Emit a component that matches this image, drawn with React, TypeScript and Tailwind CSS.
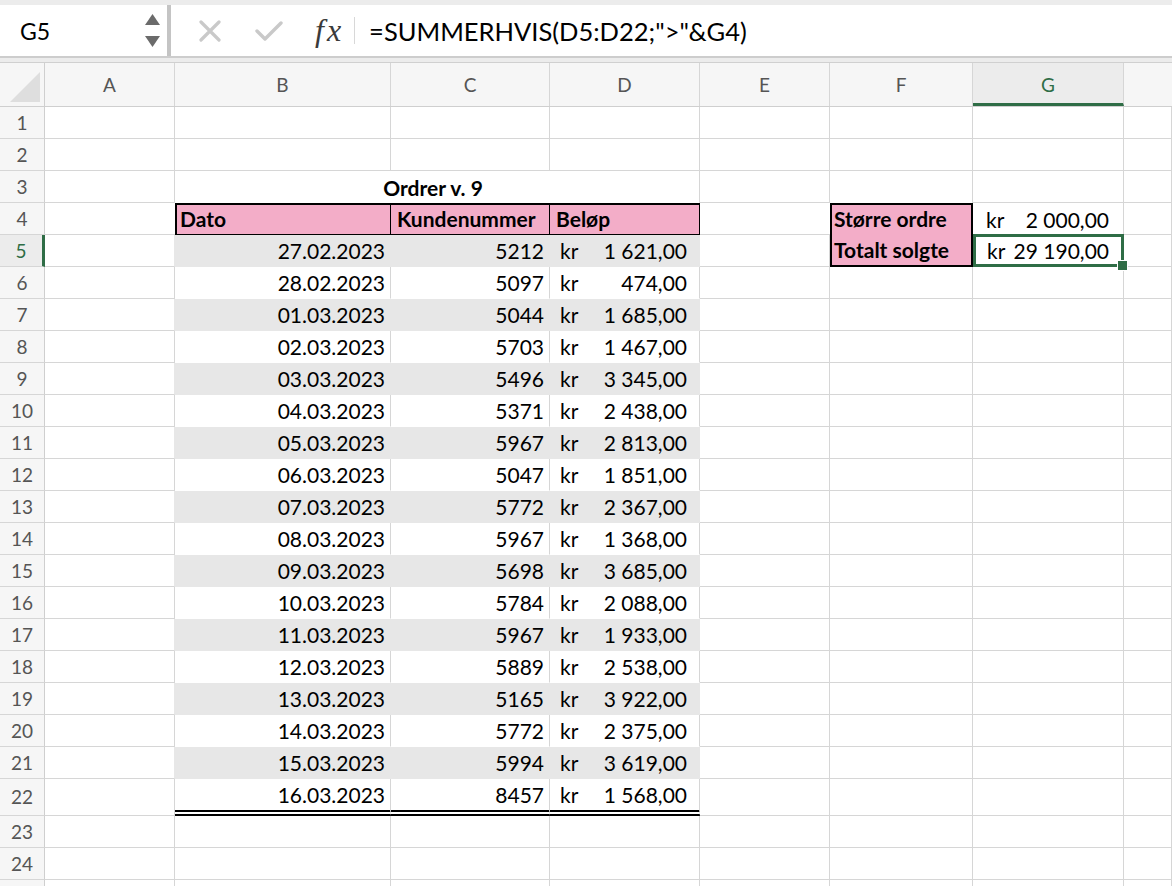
import React from 'react';

const GRID = 'grid grid-cols-[45px_130px_216px_159px_150px_130px_143px_151px_48px]';
const FONT = { fontFamily: 'Lato, "Open Sans", Arial, sans-serif' };

const data = [
  ['27.02.2023', '5212', '1 621,00'],
  ['28.02.2023', '5097', '474,00'],
  ['01.03.2023', '5044', '1 685,00'],
  ['02.03.2023', '5703', '1 467,00'],
  ['03.03.2023', '5496', '3 345,00'],
  ['04.03.2023', '5371', '2 438,00'],
  ['05.03.2023', '5967', '2 813,00'],
  ['06.03.2023', '5047', '1 851,00'],
  ['07.03.2023', '5772', '2 367,00'],
  ['08.03.2023', '5967', '1 368,00'],
  ['09.03.2023', '5698', '3 685,00'],
  ['10.03.2023', '5784', '2 088,00'],
  ['11.03.2023', '5967', '1 933,00'],
  ['12.03.2023', '5889', '2 538,00'],
  ['13.03.2023', '5165', '3 922,00'],
  ['14.03.2023', '5772', '2 375,00'],
  ['15.03.2023', '5994', '3 619,00'],
  ['16.03.2023', '8457', '1 568,00'],
];

// plain grid cell
const Cell = ({ className = '', children }: { className?: string; children?: React.ReactNode }) => (
  <div className={`flex items-end pb-[3px] whitespace-nowrap overflow-hidden border-r border-b border-[#d6d6d6] ${className}`}>
    {children}
  </div>
);

const RowHead = ({ n, active, hideLabel }: { n: number; active?: boolean; hideLabel?: boolean }) => (
  <div
    className={`flex items-center justify-center text-[19px] border-b border-[#d6d6d6] ${
      active ? 'bg-[#ececec] text-[#2f6d46] border-r-[3px] border-r-[#2f6d46]' : 'bg-[#f6f6f6] text-[#555] border-r border-r-[#cfcfcf]'
    }`}
  >
    {hideLabel ? '' : n}
  </div>
);

function FormulaBar() {
  return (
    <div className="h-[63px] bg-[#ececec] pt-[5px] border-b border-[#d0d0d0]">
      <div className="h-[53px] flex bg-white border-b-2 border-[#cdcdcd]">
        <div className="w-[167px] flex items-center justify-between pl-[20px] pr-[7px] text-[23px] text-black">
          <span>G5</span>
          <svg width="15" height="34" viewBox="0 0 15 34">
            <polygon points="7.5,0 15,11 0,11" fill="#6b6b6b" />
            <polygon points="0,22 15,22 7.5,33" fill="#6b6b6b" />
          </svg>
        </div>
        <div className="w-[4px] bg-[#c4c4c4]" />
        <div className="flex-1 flex items-center">
          <svg className="ml-[28px]" width="22" height="22" viewBox="0 0 22 22">
            <path d="M2 2 L20 20 M20 2 L2 20" stroke="#c9c9c9" strokeWidth="3.2" strokeLinecap="round" />
          </svg>
          <svg className="ml-[34px]" width="28" height="20" viewBox="0 0 28 20">
            <path d="M2 10 L10 18 L26 2" stroke="#c9c9c9" strokeWidth="3.4" fill="none" strokeLinecap="round" strokeLinejoin="round" />
          </svg>
          <span
            className="ml-[32px] text-[32px] italic text-[#3a3a3a] tracking-[3px] leading-none pb-[2px]"
            style={{ fontFamily: '"Liberation Serif", "DejaVu Serif", serif' }}
          >
            fx
          </span>
          <div className="ml-[10px] w-px h-[27px] bg-[#d8d8d8]" />
          <span className="ml-[14px] text-[25.5px] leading-[30px] text-black">=SUMMERHVIS(D5:D22;"&gt;"&amp;G4)</span>
        </div>
      </div>
    </div>
  );
}

function ColumnHeader() {
  const cols = ['B', 'C', 'D', 'E', 'F'];
  return (
    <div className={`${GRID} h-[44px] bg-[#f6f6f6] border-b border-[#cfcfcf]`}>
      <div className="border-r border-[#cfcfcf] flex items-end justify-end pr-[4px] pb-[4px]">
        <svg width="30" height="30" viewBox="0 0 30 30">
          <polygon points="0,30 30,0 30,30" fill="#dedede" />
        </svg>
      </div>
      <div className="border-r border-[#d6d6d6] flex items-center justify-center text-[19px] text-[#555]">A</div>
      {cols.map((c) => (
        <div key={c} className="border-r border-[#d6d6d6] flex items-center justify-center text-[19px] text-[#555]">
          {c}
        </div>
      ))}
      <div className="bg-[#ececec] border-r border-[#d6d6d6] border-b-[3px] border-b-[#2f6d46] flex items-center justify-center text-[19px] text-[#2f6d46] pt-[3px]">
        G
      </div>
      <div />
    </div>
  );
}

function BlankRow({ n, hideLabel }: { n: number; hideLabel?: boolean }) {
  return (
    <div className={`${GRID} h-[32px]`}>
      <RowHead n={n} hideLabel={hideLabel} />
      <Cell />
      <Cell />
      <Cell />
      <Cell />
      <Cell />
      <Cell />
      <Cell />
      <Cell />
    </div>
  );
}

function DataRow({ n, d }: { n: number; d: string[] }) {
  const shaded = n % 2 === 1;
  const last = n === 22;
  const body = shaded
    ? 'bg-[#e7e7e7] border-[#e7e7e7]'
    : last
    ? 'border-b-[6px] border-double border-b-black pb-[2px]'
    : 'border-b-white';
  return (
    <div className={`${GRID} ${last ? 'h-[37px]' : 'h-[32px]'}`}>
      <RowHead n={n} active={n === 5} />
      <Cell className={shaded ? 'border-r-[#e7e7e7]' : ''} />
      <Cell className={`justify-end pr-[5px] ${body}`}>{d[0]}</Cell>
      <Cell className={`justify-end pr-[5px] ${body}`}>{d[1]}</Cell>
      <Cell className={`justify-between pl-[10px] pr-[12px] ${body}`}>
        <span>kr</span>
        <span>{d[2]}</span>
      </Cell>
      <Cell />
      {n === 5 ? (
        <Cell className="bg-[#f3adc8] font-bold pl-[2px] pb-[2px] border-l-2 border-r-2 border-b-2 border-black">Totalt solgte</Cell>
      ) : (
        <Cell />
      )}
      {n === 5 ? (
        <div className="relative flex items-end justify-between pb-[1px] pl-[11px] pr-[12px] border-[3px] border-[#2f6d46] -mt-px whitespace-nowrap">
          <span>kr</span>
          <span>29 190,00</span>
          <div className="absolute -right-[7px] -bottom-[7px] w-[11px] h-[11px] bg-[#2f6d46] border-[1.5px] border-white" />
        </div>
      ) : (
        <Cell />
      )}
      <Cell />
    </div>
  );
}

export default function App() {
  return (
    <div className="w-[1172px] h-[886px] overflow-hidden bg-white text-black text-[21px] leading-[24px]" style={FONT}>
      <FormulaBar />
      <ColumnHeader />
      <BlankRow n={1} />
      <BlankRow n={2} />
      {/* row 3: title merged across B:D */}
      <div className={`${GRID} h-[32px]`}>
        <RowHead n={3} />
        <Cell />
        <Cell className="col-span-3 justify-center font-bold border-b-0 pr-[8px]">Ordrer v. 9</Cell>
        <Cell />
        <Cell className="border-b-0" />
        <Cell />
        <Cell />
      </div>
      {/* row 4: table header */}
      <div className={`${GRID} h-[32px]`}>
        <RowHead n={4} />
        <Cell className="border-r-0" />
        <Cell className="bg-[#f3adc8] font-bold pl-[3px] pb-[2px] border-2 border-black">Dato</Cell>
        <Cell className="bg-[#f3adc8] font-bold pl-[6px] pb-[2px] border-2 border-l-0 border-black">Kundenummer</Cell>
        <Cell className="bg-[#f3adc8] font-bold pl-[6px] pb-[2px] border-2 border-l-0 border-black">Beløp</Cell>
        <Cell className="border-r-0" />
        <Cell className="bg-[#f3adc8] font-bold pl-[2px] pb-[4px] border-l-2 border-r-2 border-t-2 border-b-0 border-black">Større ordre</Cell>
        <Cell className="justify-between pl-[13px] pr-[14px] border-b-0">
          <span>kr</span>
          <span>2 000,00</span>
        </Cell>
        <Cell />
      </div>
      {data.map((d, i) => (
        <DataRow key={i} n={i + 5} d={d} />
      ))}
      <BlankRow n={23} />
      <BlankRow n={24} />
      <BlankRow n={25} hideLabel />
    </div>
  );
}
